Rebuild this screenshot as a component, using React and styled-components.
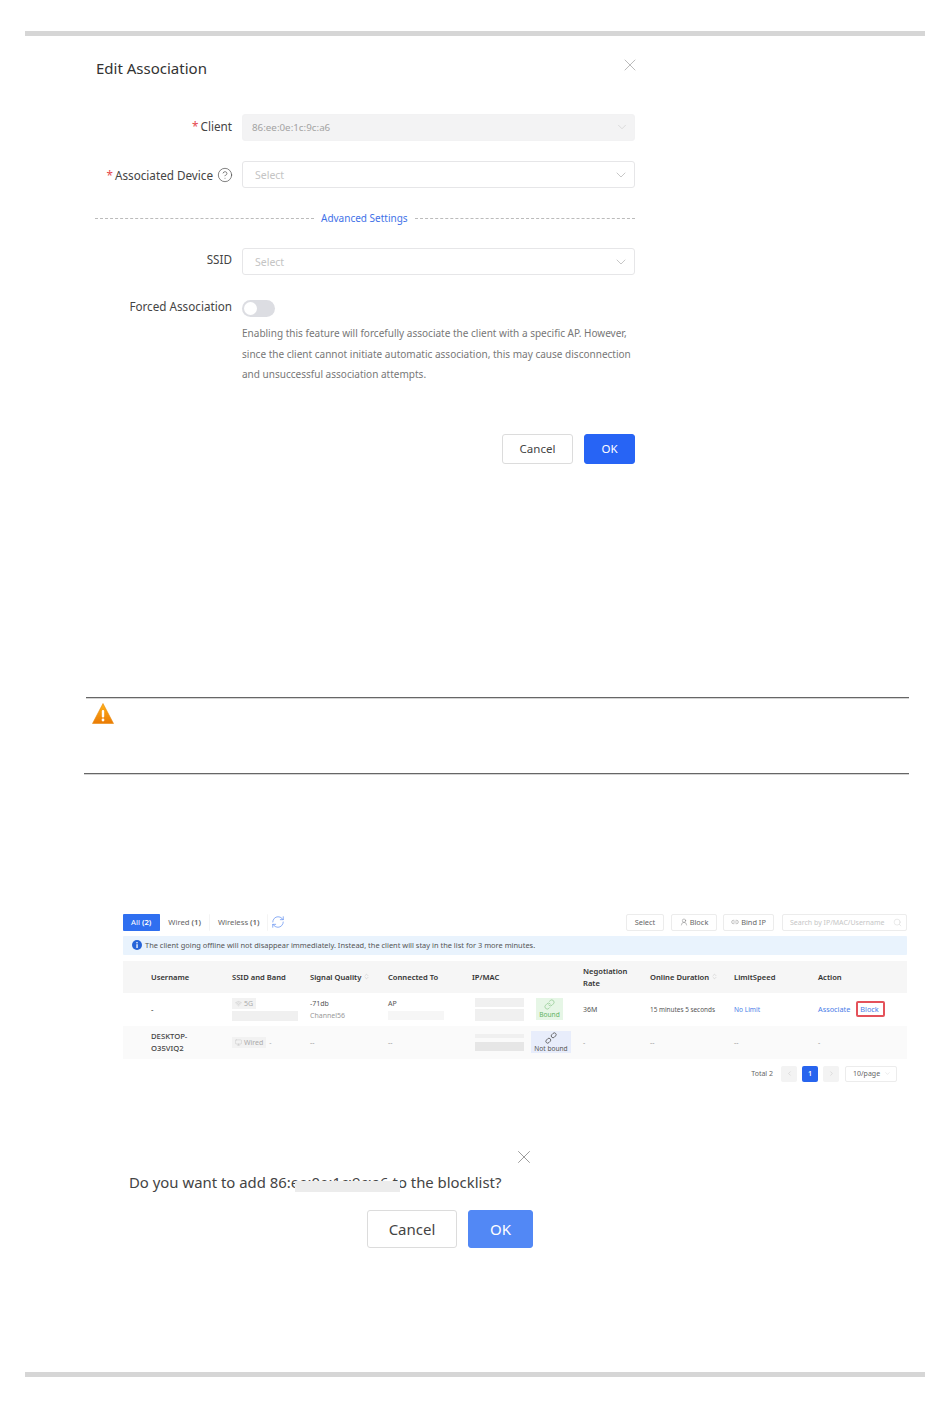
import styled, { createGlobalStyle } from "styled-components";
import {
  X,
  ChevronDown,
  ChevronLeft,
  ChevronRight,
  CircleHelp,
  RefreshCw,
  Search,
  Wifi,
  Link,
  Link2,
  UserRound,
  Monitor,
  ChevronsUpDown,
} from "lucide-react";

const GlobalStyle = createGlobalStyle`
  body {
    margin: 0;
    background: #fff;
    font-family: "Noto Sans", "Open Sans", sans-serif;
    color: #444;
  }
`;

const Page = styled.div`
  width: 950px;
  height: 1408px;
  padding-top: 31px;
  box-sizing: border-box;
  overflow: hidden;
`;

const PageBar = styled.div`
  height: 5px;
  width: 900px;
  margin: ${(p) => p.$top || 0}px 0 0 25px;
  background: #d6d6d6;
`;

/* Edit Association dialog */
const Dialog = styled.section`
  width: 540px;
  margin: 21px 0 0 95px;
`;

const DialogHead = styled.div`
  display: flex;
  justify-content: space-between;
  align-items: flex-start;
  height: 24px;
`;

const DialogTitle = styled.h2`
  margin: 0 0 0 1px;
  font-size: 15px;
  line-height: 23px;
  font-weight: 400;
  color: #333;
`;

const CloseIcon = styled(X)`
  color: #999;
  margin: -2px -5px 0 0;
`;

const FormRow = styled.div`
  display: flex;
  align-items: center;
  height: ${(p) => p.$h || 27}px;
  margin-top: ${(p) => p.$top}px;
`;

const Label = styled.label`
  width: 137px;
  flex: none;
  display: flex;
  justify-content: flex-end;
  align-items: center;
  gap: 4px;
  padding-bottom: ${(p) => p.$lift || 0}px;
  font-size: 11.7px;
  color: #444;
  white-space: nowrap;
`;

const Star = styled.span`
  color: #e5484d;
  margin-right: -1px;
`;

const HelpIcon = styled(CircleHelp)`
  margin-right: -1px;
`;

const Select = styled.div`
  margin-left: 10px;
  flex: 1;
  height: 27px;
  box-sizing: border-box;
  display: flex;
  align-items: center;
  justify-content: space-between;
  padding: 0 5px ${(p) => (p.$disabled ? "1px" : "0")} ${(p) => (p.$disabled ? "9px" : "12px")};
  border: 1px solid ${(p) => (p.$disabled ? "#f2f2f3" : "#e6e6e8")};
  border-radius: 3px;
  background: ${(p) => (p.$disabled ? "#f3f3f4" : "#fff")};
  color: ${(p) => (p.$disabled ? "#a3a3a3" : "#c4c4c4")};
  font-size: ${(p) => (p.$disabled ? "9.8px" : "10.5px")};
  svg {
    color: ${(p) => (p.$disabled ? "#c8c8c8" : "#aaa")};
  }
`;

const Divider = styled.div`
  display: flex;
  align-items: center;
  gap: 7px;
  height: 16px;
  margin-top: 22px;
  color: #3f72e8;
  font-size: 10px;
  white-space: nowrap;
  &::before,
  &::after {
    content: "";
    flex: 1;
    border-top: 1px dashed #bbb;
  }
  &::before {
    flex: none;
    width: 219px;
  }
`;

const Toggle = styled.div`
  margin-left: 10px;
  width: 33px;
  height: 17px;
  box-sizing: border-box;
  padding: 2px;
  border-radius: 9px;
  background: #dcdde2;
  &::before {
    content: "";
    display: block;
    width: 13px;
    height: 13px;
    border-radius: 50%;
    background: #fff;
  }
`;

const Help = styled.p`
  margin: 6px 0 0 147px;
  width: 395px;
  font-size: 10.03px;
  line-height: 20.5px;
  color: #777;
  white-space: nowrap;
`;

const DialogFoot = styled.div`
  display: flex;
  justify-content: flex-end;
  gap: 11px;
  margin-top: ${(p) => p.$top}px;
`;

const Button = styled.button`
  width: ${(p) => p.$w}px;
  height: ${(p) => p.$h}px;
  padding: 0;
  border-radius: 3px;
  border: 1px solid ${(p) => (p.$primary ? p.$color : "#dcdcdc")};
  background: ${(p) => (p.$primary ? p.$color : "#fff")};
  color: ${(p) => (p.$primary ? "#fff" : "#444")};
  font-family: inherit;
  font-size: ${(p) => p.$size}px;
`;

/* Warning note */
const Rule = styled.div`
  height: 1px;
  margin: ${(p) => p.$top || 0}px 0 0 ${(p) => p.$left}px;
  width: ${(p) => 909 - p.$left}px;
  background: #666;
  box-shadow: 0 0.5px 0 #aaa;
`;

const Warning = styled.div`
  height: 75px;
  box-sizing: border-box;
  padding: 5px 0 0 92px;
  svg {
    display: block;
  }
`;

/* Client list screenshot */
const Shot = styled.section`
  width: 784px;
  margin: 140px 0 0 123px;
`;

const Toolbar = styled.div`
  display: flex;
  align-items: center;
  height: 17px;
`;

const Tab = styled.div`
  height: 17px;
  line-height: 17px;
  padding: 0 8px;
  box-sizing: border-box;
  font-size: 7.7px;
  white-space: nowrap;
  border-radius: 1px;
  border-right: 1px solid ${(p) => (p.$active ? "#2f6ff0" : "#f4f4f4")};
  background: ${(p) => (p.$active ? "#2f6ff0" : "#fff")};
  color: ${(p) => (p.$active ? "#fff" : "#666")};
  b {
    font-weight: 600;
  }
`;

const Refresh = styled(RefreshCw)`
  color: #5b8df0;
  margin-left: 3px;
`;

const ToolSpacer = styled.div`
  flex: 1;
`;

const ToolButton = styled.div`
  height: 17px;
  box-sizing: border-box;
  display: flex;
  align-items: center;
  justify-content: center;
  gap: 2px;
  width: ${(p) => p.$w}px;
  margin-left: ${(p) => p.$left || 0}px;
  border: 1px solid #ececec;
  border-radius: 2px;
  font-size: 7.4px;
  color: #666;
  white-space: nowrap;
`;

const SearchBox = styled(ToolButton)`
  justify-content: space-between;
  padding: 0 4px 0 7px;
  color: #c6c6c6;
  font-size: 7px;
`;

const Alert = styled.div`
  display: flex;
  align-items: center;
  gap: 3px;
  height: 19px;
  margin-top: 5px;
  padding-left: 9px;
  background: #e9f3fd;
  border-radius: 1px;
  font-size: 7.45px;
  color: #555;
  white-space: nowrap;
`;

const TableRow = styled.div`
  display: grid;
  grid-template-columns: 81px 78px 78px 84px 64px 47px 67px 84px 84px 89px;
  align-items: center;
  box-sizing: border-box;
  padding-left: 28px;
  width: 784px;
  height: ${(p) => p.$h}px;
  background: ${(p) => p.$bg || "#fff"};
  font-size: 7px;
  color: #555;
`;

const HeadRow = styled(TableRow)`
  margin-top: 6px;
  font-weight: 600;
  color: #333;
  font-size: 7.6px;
  line-height: 12px;
`;

const HeadCell = styled.div`
  display: flex;
  align-items: center;
  gap: 2px;
  svg {
    color: #aaa;
  }
`;

const Cell = styled.div`
  display: flex;
  flex-direction: column;
  align-items: flex-start;
  gap: ${(p) => p.$gap || 3}px;
  min-width: 0;
  white-space: nowrap;
  font-size: ${(p) => p.$size || 7}px;
  padding-left: ${(p) => p.$pad || 0}px;
`;

const NameCell = styled(Cell)`
  font-weight: 500;
  color: #444;
  font-size: 7.7px;
  line-height: 12px;
  gap: 0;
`;

const Faint = styled.span`
  color: #999;
`;

const Chip = styled.span`
  display: inline-flex;
  align-items: center;
  gap: 2px;
  height: 11px;
  padding: 0 3px;
  background: #f2f2f2;
  color: #aaa;
  font-size: 7px;
`;

const ChipDot = styled.span`
  color: #aaa;
  margin-left: 3px;
`;

const ChipLine = styled.div`
  display: flex;
  align-items: center;
`;

const Mask = styled.div`
  width: ${(p) => p.$w}px;
  height: ${(p) => p.$h}px;
  background: ${(p) => p.$color || "#f0f0f0"};
`;

const BindCell = styled.div`
  display: flex;
  justify-content: flex-start;
  margin-left: ${(p) => p.$left}px;
`;

const BindTag = styled.div`
  display: flex;
  flex-direction: column;
  align-items: center;
  justify-content: center;
  width: ${(p) => p.$w}px;
  height: 22px;
  background: ${(p) => p.$bg};
  color: ${(p) => p.$color};
  font-size: 6.6px;
  line-height: 9px;
  white-space: nowrap;
`;

const BlueText = styled.span`
  color: #4a7de8;
`;

const Actions = styled.div`
  display: flex;
  align-items: center;
  gap: 6px;
  white-space: nowrap;
  color: #4a7de8;
  font-size: 7.3px;
`;

const Callout = styled.span`
  display: inline-flex;
  align-items: center;
  width: 29px;
  height: 16px;
  box-sizing: border-box;
  padding-left: 2px;
  border: 2px solid #e4525a;
  border-radius: 2px;
  color: #4a7de8;
`;

const Pager = styled.div`
  display: flex;
  justify-content: flex-end;
  align-items: center;
  height: 16px;
  margin-top: 7px;
  padding-right: 10px;
  font-size: 7px;
  color: #666;
`;

const PageBtn = styled.div`
  width: 16px;
  height: 16px;
  margin-left: ${(p) => p.$left || 5}px;
  display: flex;
  align-items: center;
  justify-content: center;
  border-radius: 2px;
  background: ${(p) => (p.$active ? "#2764ee" : "#f3f3f3")};
  color: ${(p) => (p.$active ? "#fff" : "#ccc")};
  font-weight: ${(p) => (p.$active ? 600 : 400)};
`;

const PageSize = styled.div`
  width: 52px;
  height: 16px;
  margin-left: 6px;
  box-sizing: border-box;
  display: flex;
  align-items: center;
  justify-content: space-between;
  padding: 0 5px 0 7px;
  border: 1px solid #ececec;
  border-radius: 2px;
  color: #666;
  svg {
    color: #bbb;
  }
`;

/* Blocklist confirm */
const Confirm = styled.section`
  width: 404px;
  margin: 69px 0 0 129px;
`;

const ConfirmClose = styled.div`
  display: flex;
  justify-content: flex-end;
  height: 12px;
  svg {
    color: #777;
    display: block;
    margin: -5px -2px 0 0;
  }
`;

const ConfirmText = styled.p`
  position: relative;
  margin: 8px 0 0;
  font-size: 14.9px;
  line-height: 22px;
  color: #444;
  white-space: nowrap;
`;

const TextMask = styled.span`
  position: absolute;
  left: 166px;
  top: 10px;
  width: 105px;
  height: 11px;
  background: #ececec;
`;

// broken chain, lucide's Unlink goes to mush at this size
const BrokenChain = () => (
  <svg width="12" height="12" viewBox="0 0 12 12">
    <g transform="rotate(-45 6 6)" fill="none" stroke="currentColor" strokeWidth="0.8">
      <rect x="-0.5" y="4.2" width="5.4" height="3.6" rx="1.8" />
      <rect x="7.1" y="4.2" width="5.4" height="3.6" rx="1.8" />
    </g>
  </svg>
);

const App = () => {
  return (
    <Page>
      <GlobalStyle />
      <PageBar />

      <Dialog>
        <DialogHead>
          <DialogTitle>Edit Association</DialogTitle>
          <CloseIcon size={20} strokeWidth={0.8} />
        </DialogHead>

        <FormRow $top={33}>
          <Label $lift={4}>
            <span>
              <Star>* </Star> Client
            </span>
          </Label>
          <Select $disabled>
            86:ee:0e:1c:9c:a6
            <ChevronDown size={14} strokeWidth={1} />
          </Select>
        </FormRow>

        <FormRow $top={20}>
          <Label>
            <span>
              <Star>* </Star> Associated Device
            </span>
            <HelpIcon size={16} strokeWidth={1} />
          </Label>
          <Select>
            Select
            <ChevronDown size={16} strokeWidth={1} />
          </Select>
        </FormRow>

        <Divider>Advanced Settings</Divider>

        <FormRow $top={22}>
          <Label $lift={5}>SSID</Label>
          <Select>
            Select
            <ChevronDown size={16} strokeWidth={1} />
          </Select>
        </FormRow>

        <FormRow $top={25} $h={17}>
          <Label $lift={5}>Forced Association</Label>
          <Toggle />
        </FormRow>

        <Help>
          Enabling this feature will forcefully associate the client with a specific AP. However,
          <br />
          since the client cannot initiate automatic association, this may cause disconnection
          <br />
          and unsuccessful association attempts.
        </Help>

        <DialogFoot $top={49}>
          <Button $w={71} $h={30} $size={11.5}>
            Cancel
          </Button>
          <Button $primary $color="#2764f5" $w={51} $h={30} $size={11.5}>
            OK
          </Button>
        </DialogFoot>
      </Dialog>

      <Rule $left={86} $top={233} />
      <Warning>
        <svg width="22" height="21" viewBox="0 0 22 21">
          <defs>
            <linearGradient id="warn" x1="0" y1="0" x2="0" y2="1">
              <stop offset="0" stopColor="#ffb31a" />
              <stop offset="1" stopColor="#ea7a05" />
            </linearGradient>
          </defs>
          <path d="M11 0.5 L21.5 20.5 H0.5 Z" fill="url(#warn)" stroke="#e98a0c" strokeWidth="0.6" strokeLinejoin="round" />
          <rect x="9.8" y="7" width="2.4" height="7.5" rx="1" fill="#fff" />
          <circle cx="11" cy="17" r="1.4" fill="#fff" />
        </svg>
      </Warning>
      <Rule $left={84} />

      <Shot>
        <Toolbar>
          <Tab $active>
            All <b>(2)</b>
          </Tab>
          <Tab>
            Wired <b>(1)</b>
          </Tab>
          <Tab>
            Wireless <b>(1)</b>
          </Tab>
          <Refresh size={14} strokeWidth={1.2} />
          <ToolSpacer />
          <ToolButton $w={38}>Select</ToolButton>
          <ToolButton $w={46} $left={7}>
            <UserRound size={8} strokeWidth={1.2} /> Block
          </ToolButton>
          <ToolButton $w={51} $left={6}>
            <Link2 size={8} strokeWidth={1.2} /> Bind IP
          </ToolButton>
          <SearchBox $w={125} $left={8}>
            Search by IP/MAC/Username
            <Search size={9} strokeWidth={1} />
          </SearchBox>
        </Toolbar>

        <Alert>
          <svg width="10" height="10" viewBox="0 0 10 10">
            <circle cx="5" cy="5" r="5" fill="#2764d8" />
            <rect x="4.4" y="4.2" width="1.3" height="3.8" fill="#fff" />
            <circle cx="5" cy="2.8" r="0.8" fill="#fff" />
          </svg>
          The client going offline will not disappear immediately. Instead, the client will stay in the list for 3 more minutes.
        </Alert>

        <HeadRow $h={32} $bg="#f6f6f6">
          <HeadCell>Username</HeadCell>
          <HeadCell>SSID and Band</HeadCell>
          <HeadCell>
            Signal Quality <ChevronsUpDown size={7} strokeWidth={1.2} />
          </HeadCell>
          <HeadCell>Connected To</HeadCell>
          <HeadCell>IP/MAC</HeadCell>
          <HeadCell />
          <HeadCell>
            Negotiation
            <br />
            Rate
          </HeadCell>
          <HeadCell>
            Online Duration <ChevronsUpDown size={7} strokeWidth={1.2} />
          </HeadCell>
          <HeadCell>LimitSpeed</HeadCell>
          <HeadCell>Action</HeadCell>
        </HeadRow>

        <TableRow $h={33}>
          <NameCell>-</NameCell>
          <Cell $gap={2}>
            <Chip>
              <Wifi size={7} strokeWidth={1.2} /> 5G
            </Chip>
            <Mask $w={66} $h={10} />
          </Cell>
          <Cell>
            <span>-71db</span>
            <Faint>Channel56</Faint>
          </Cell>
          <Cell>
            <span>AP</span>
            <Mask $w={56} $h={9} $color="#f6f6f6" />
          </Cell>
          <Cell $pad={3} $gap={2}>
            <Mask $w={49} $h={9} />
            <Mask $w={49} $h={12} />
          </Cell>
          <BindCell $left={0}>
            <BindTag $w={27} $bg="#e6f6e6" $color="#62b262">
              <Link size={11} strokeWidth={1} />
              Bound
            </BindTag>
          </BindCell>
          <Cell>36M</Cell>
          <Cell $size={6.4}>15 minutes 5 seconds</Cell>
          <Cell $size={6.6}>
            <BlueText>No Limit</BlueText>
          </Cell>
          <Actions>
            Associate
            <Callout>Block</Callout>
          </Actions>
        </TableRow>

        <TableRow $h={33} $bg="#fafafa">
          <NameCell>
            DESKTOP-
            <br />
            O35VIQ2
          </NameCell>
          <ChipLine>
            <Chip>
              <Monitor size={7} strokeWidth={1} /> Wired
            </Chip>
            <ChipDot>-</ChipDot>
          </ChipLine>
          <Cell>
            <Faint>--</Faint>
          </Cell>
          <Cell>
            <Faint>--</Faint>
          </Cell>
          <Cell $pad={3} $gap={4}>
            <Mask $w={49} $h={4} />
            <Mask $w={49} $h={9} $color="#e6e6e6" />
          </Cell>
          <BindCell $left={-5}>
            <BindTag $w={40} $bg="#e8edfb" $color="#555">
              <BrokenChain />
              Not bound
            </BindTag>
          </BindCell>
          <Cell>
            <Faint>-</Faint>
          </Cell>
          <Cell>
            <Faint>--</Faint>
          </Cell>
          <Cell>
            <Faint>--</Faint>
          </Cell>
          <Cell>
            <Faint>-</Faint>
          </Cell>
        </TableRow>

        <Pager>
          Total 2
          <PageBtn $left={8}>
            <ChevronLeft size={7} />
          </PageBtn>
          <PageBtn $active>1</PageBtn>
          <PageBtn>
            <ChevronRight size={7} />
          </PageBtn>
          <PageSize>
            10/page
            <ChevronDown size={7} strokeWidth={1} />
          </PageSize>
        </Pager>
      </Shot>

      <Confirm>
        <ConfirmClose>
          <X size={22} strokeWidth={0.8} />
        </ConfirmClose>
        <ConfirmText>
          Do you want to add 86:ee:0e:1c:9c:a6 to the blocklist?
          <TextMask />
        </ConfirmText>
        <DialogFoot $top={17}>
          <Button $w={90} $h={38} $size={15}>
            Cancel
          </Button>
          <Button $primary $color="#5288f5" $w={65} $h={38} $size={15}>
            OK
          </Button>
        </DialogFoot>
      </Confirm>

      <PageBar $top={124} />
    </Page>
  );
};

export default App;
